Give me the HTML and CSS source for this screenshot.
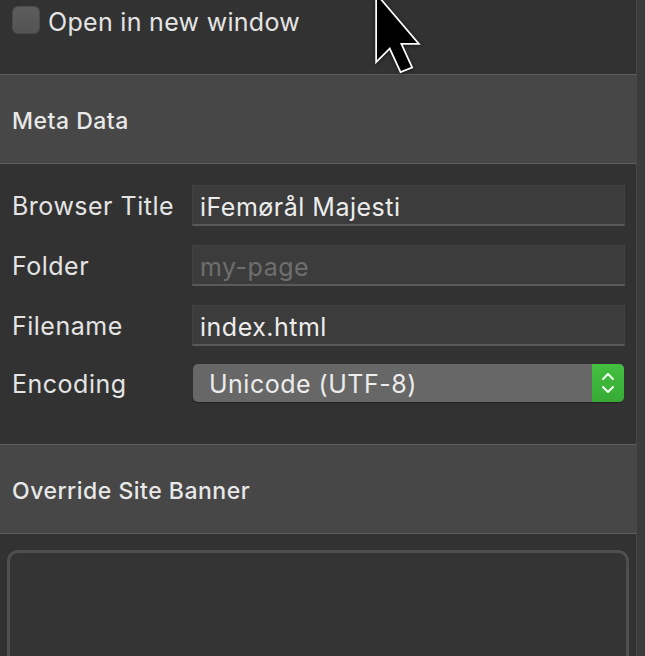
FILE: index.html
```html
<!DOCTYPE html>
<html>
<head>
<meta charset="utf-8">
<link rel="stylesheet" href="styles.css">
</head>
<body>
<div class="window">
  <div class="panel">
    <div class="check-row">
      <span class="checkbox"></span>
      <span class="check-label">Open in new window</span>
    </div>
    <div class="section-head">Meta Data</div>
    <div class="form">
      <div class="row">
        <label class="label">Browser Title</label>
        <div class="field">iFemørål Majesti</div>
      </div>
      <div class="row">
        <label class="label">Folder</label>
        <div class="field placeholder">my-page</div>
      </div>
      <div class="row">
        <label class="label">Filename</label>
        <div class="field">index.html</div>
      </div>
      <div class="row row-select">
        <label class="label">Encoding</label>
        <div class="select">
          <span class="select-text">Unicode (UTF-8)</span>
          <span class="stepper">
            <svg width="16" height="26" viewBox="0 0 16 26"><path d="M3 9 L8 4 L13 9 M3 17 L8 22 L13 17" fill="none" stroke="#f2fff2" stroke-width="2" stroke-linecap="round" stroke-linejoin="round"/></svg>
          </span>
        </div>
      </div>
    </div>
    <div class="section-head">Override Site Banner</div>
    <div class="banner-area">
      <div class="textarea"></div>
    </div>
  </div>
  <div class="scroll-track"></div>
</div>
<svg class="cursor" width="60" height="80" viewBox="0 0 60 80">
  <path d="M4 -4 L4 60 L17 47 L28 71 L38 67 L27 43 L44 43 Z" fill="#000" stroke="#fff" stroke-width="3.5" stroke-linejoin="miter" paint-order="stroke"/>
</svg>
</body>
</html>
```
FILE: styles.css
```css
html, body {
  margin: 0;
  padding: 0;
  background: #323232;
  font-family: "Inter", "Liberation Sans", sans-serif;
  color: #e4e4e4;
  overflow: hidden;
}
.window {
  display: flex;
  width: 645px;
  height: 656px;
}
.panel {
  width: 636px;
  flex: none;
  display: flex;
  flex-direction: column;
}
.panel > * {
  flex: none;
}
.scroll-track {
  flex: 1;
  background: #3b3b3b;
  border-left: 1px solid #484848;
}
.check-row {
  height: 74px;
  display: flex;
  align-items: flex-start;
  padding-left: 12px;
  box-sizing: border-box;
  padding-top: 6px;
  gap: 8px;
}
.checkbox {
  width: 28px;
  height: 28px;
  box-sizing: border-box;
  border-radius: 6px;
  background: linear-gradient(#5d5d5d, #535353);
  border: 1px solid #4a4a4a;
}
.check-label {
  font-size: 25px;
  line-height: 32px;
  letter-spacing: 0.3px;
}
.section-head {
  height: 90px;
  box-sizing: border-box;
  background: #474747;
  border-top: 1px solid #5e5e5e;
  border-bottom: 1px solid #5e5e5e;
  display: flex;
  align-items: center;
  padding-left: 12px;
  padding-top: 3px;
  font-size: 23px;
  font-weight: 500;
  letter-spacing: 0.5px;
  color: #e8e8e8;
}
.form {
  padding: 21px 11px 42px 12px;
  display: flex;
  flex-direction: column;
  gap: 19px;
}
.row {
  display: flex;
  align-items: center;
  height: 41px;
}
.row-select {
  height: 38px;
  margin-top: -1px;
}
.label {
  width: 180px;
  flex: none;
  font-size: 25px;
  letter-spacing: 0.5px;
  padding-top: 1px;
}
.field {
  flex: 1;
  height: 41px;
  box-sizing: border-box;
  background: #3c3c3c;
  border: 1px solid #434343;
  border-bottom: 2px solid #5a5a5a;
  font-size: 25px;
  letter-spacing: 0.5px;
  line-height: 42px;
  padding-left: 7px;
  color: #ececec;
}
.field.placeholder {
  color: #6e6e6e;
}
.select {
  flex: 1;
  height: 38px;
  margin-left: 1px;
  margin-right: 1px;
  display: flex;
  border-radius: 5px;
  overflow: hidden;
  background: #676767;
  box-shadow: 0 1px 1px rgba(0,0,0,0.35);
}
.select-text {
  flex: 1;
  font-size: 25px;
  letter-spacing: 0.5px;
  line-height: 41px;
  padding-left: 16px;
  color: #ececec;
}
.stepper {
  width: 32px;
  background: linear-gradient(#44c041, #37ab35);
  display: flex;
  align-items: center;
  justify-content: center;
}
.banner-area {
  padding: 16px 7px 0 7px;
}
.textarea {
  height: 120px;
  border: 3px solid #4f4f4f;
  border-bottom: none;
  border-radius: 11px 11px 0 0;
  background: #343434;
}
.cursor {
  position: absolute;
  left: 373px;
  top: 0;
  filter: drop-shadow(0 1px 2px rgba(0,0,0,0.5));
}
```
